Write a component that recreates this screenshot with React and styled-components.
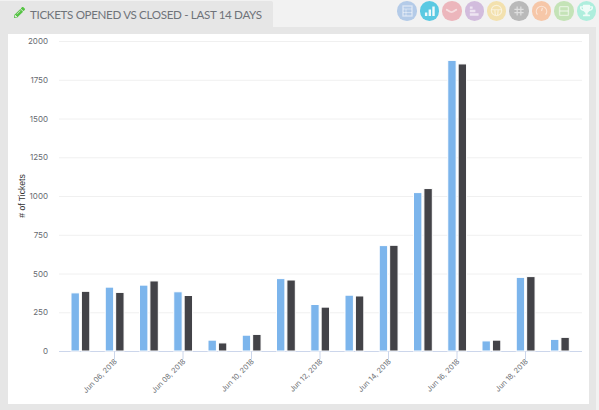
import React from "react";
import styled, { createGlobalStyle } from "styled-components";
import { FaPencilAlt, FaTrophy } from "react-icons/fa";

const Global = createGlobalStyle`
  html, body { margin: 0; padding: 0; background: #f2f2f2; }
  #root { width: 599px; height: 410px; overflow: hidden; }
`;

const Page = styled.div`
  width: 599px;
  height: 410px;
  display: flex;
  flex-direction: column;
  background: #f2f2f2;
  font-family: "Lato", "Liberation Sans", sans-serif;
`;
const Header = styled.header`
  height: 27px;
  flex: none;
  display: flex;
  justify-content: space-between;
`;
const Tab = styled.div`
  width: 273px;
  margin-top: 1px;
  padding-left: 14px;
  box-sizing: border-box;
  display: flex;
  align-items: center;
  gap: 5px;
  background: #e6e6e6;
  border-top-right-radius: 2px;
`;
const PencilMark = styled(FaPencilAlt)`
  width: 11px;
  height: 11px;
  color: #55c443;
  margin-top: -4px;
  flex: none;
`;
const Title = styled.h1`
  margin: 0;
  font-size: 11.6px;
  font-weight: 400;
  color: #6f7379;
  white-space: nowrap;
  letter-spacing: -0.33px;
`;
const IconRow = styled.div`
  display: flex;
  gap: 2.9px;
  padding: 1px 3px 0 0;
  align-items: flex-start;
`;
const IconDot = styled.span`
  width: 19.5px;
  height: 19.5px;
  border-radius: 50%;
  background: ${(p) => p.$bg};
  color: rgba(255, 255, 255, 0.55);
  display: flex;
  align-items: center;
  justify-content: center;
  svg { display: block; }
`;
const Panel = styled.main`
  flex: 1;
  margin-right: 3px;
  padding: 7px 7px 6px 8px;
  background: #e6e6e6;
  display: flex;
  min-height: 0;
`;
const Card = styled.section`
  flex: 1;
  background: #fff;
`;
const Chart = styled.svg`
  display: block;
  width: 581px;
  height: 370px;
  font-family: "Inter", "Liberation Sans", sans-serif;
`;
const YLabel = styled.text`
  font-size: 8px;
  fill: #666a70;
  text-anchor: end;
`;
const XLabel = styled.text`
  font-size: 7.3px;
  fill: #6c7075;
  text-anchor: end;
  opacity: 0.99;
`;
const AxisTitle = styled.text`
  font-family: "Liberation Sans", sans-serif;
  font-size: 8.6px;
  fill: #333;
  text-anchor: middle;
  opacity: 0.99;
`;

const s = { fill: "none", stroke: "currentColor", strokeWidth: 1.3 };
const icons = [
  ["#b4cbe8", <svg width="11" height="12" viewBox="0 0 11 12" {...s}><rect x="1" y="1" width="9" height="10" /><path d="M1 4h9M4 4v7M1 7.5h9" strokeWidth="0.8" /></svg>],
  ["#5ac9e2", <svg width="12" height="12" viewBox="0 0 13 13"><path fill="#fff" fillOpacity=".9" d="M1 8h2.6v4H1zM5 5h2.6v7H5zM9 1.5h2.6V12H9z" /></svg>],
  ["#ecb6bc", <svg width="13" height="8" viewBox="0 0 14 8"><path fill="none" stroke="currentColor" strokeWidth="1.9" d="M1 2.5c2.5 0 3 2.6 6 2.6s3.5-2.6 6-2.6" /></svg>],
  ["#d2bcdd", <svg width="12" height="12" viewBox="0 0 13 13"><path fill="#fff" fillOpacity=".62" d="M2 1.5h3v2.6H2zM2 5.2h6v2.6H2zM2 9h9.5v2.6H2z" /></svg>],
  ["#f3e1ae", <svg width="13" height="13" viewBox="0 0 14 14" {...s}><circle cx="7" cy="7" r="5.6" /><path d="M1.6 6.2h10.8M5.2 6.4 5.8 12M8.8 6.4 8.2 12" /></svg>],
  ["#b9b9b9", <svg width="12" height="12" viewBox="0 0 13 13" {...s}><path d="M4.5 1.5v10M8.5 1.5v10M1.5 4.7h10M1.5 8.3h10" /></svg>],
  ["#f6c7a8", <svg width="13" height="13" viewBox="0 0 14 14" {...s}><path d="M2.6 11.5a5.6 5.6 0 1 1 8.8 0" /><path d="M7 7.5 8 4" /></svg>],
  ["#c4e3b7", <svg width="12" height="12" viewBox="0 0 13 13" {...s} strokeWidth="1.5"><rect x="1.7" y="1.7" width="9.6" height="9.6" rx="1" /><path d="M1.7 6.5h9.6" /></svg>],
  ["#aeeedd", <FaTrophy size={13} color="rgba(255,255,255,.8)" />],
];

const data = [
  [375, 385], [412, 378], [425, 452], [382, 358], [70, 52],
  [102, 107], [467, 458], [300, 283], [360, 355], [680, 682],
  [1022, 1048], [1875, 1852], [65, 70], [475, 480], [75, 88],
];
const ticks = [0, 250, 500, 750, 1000, 1250, 1500, 1750, 2000];
const dates = ["Jun 06, 2018", "Jun 08, 2018", "Jun 10, 2018", "Jun 12, 2018", "Jun 14, 2018", "Jun 16, 2018", "Jun 18, 2018"];
const Y0 = 351;
const yOf = (v) => Y0 - v * 0.155;
const STEP = 34.25;

export default function App() {
  return (
    <Page>
      <Global />
      <Header>
        <Tab>
          <PencilMark />
          <Title>TICKETS OPENED VS CLOSED - LAST 14 DAYS</Title>
        </Tab>
        <IconRow>
          {icons.map(([bg, ic], i) => (
            <IconDot key={i} $bg={bg}>{ic}</IconDot>
          ))}
        </IconRow>
      </Header>
      <Panel>
        <Card>
          <Chart viewBox="8 34 581 370">
            {ticks.map((t) => (
              <g key={t}>
                {t > 0 && <path d={`M59 ${yOf(t) + 0.5}H582`} stroke="#f0f0f0" strokeWidth="1" />}
                <YLabel x="48" y={yOf(t) + 3}>{t}</YLabel>
              </g>
            ))}
            <path d={`M59 ${Y0 + 0.5}H582`} stroke="#ccd6eb" strokeWidth="1" />
            {data.map(([a, b], i) => {
              const x = 71 + i * STEP;
              return (
                <g key={i} stroke="#fff" strokeWidth="1">
                  <rect x={x} y={yOf(a)} width="8.4" height={Y0 - yOf(a)} fill="#7cb5ec" />
                  <rect x={x + 10.4} y={yOf(b)} width="8.4" height={Y0 - yOf(b)} fill="#434348" />
                </g>
              );
            })}
            {dates.map((d, i) => {
              const x = 114.5 + i * STEP * 2;
              return (
                <g key={d}>
                  <path d={`M${x} ${Y0 + 1}v7`} stroke="#ccd6eb" strokeWidth="1" />
                  <XLabel x={x + 3} y={362} transform={`rotate(-45 ${x + 3} 362)`}>{d}</XLabel>
                </g>
              );
            })}
            <AxisTitle x="25" y="196" transform="rotate(-90 25 196)"># of Tickets</AxisTitle>
          </Chart>
        </Card>
      </Panel>
    </Page>
  );
}
